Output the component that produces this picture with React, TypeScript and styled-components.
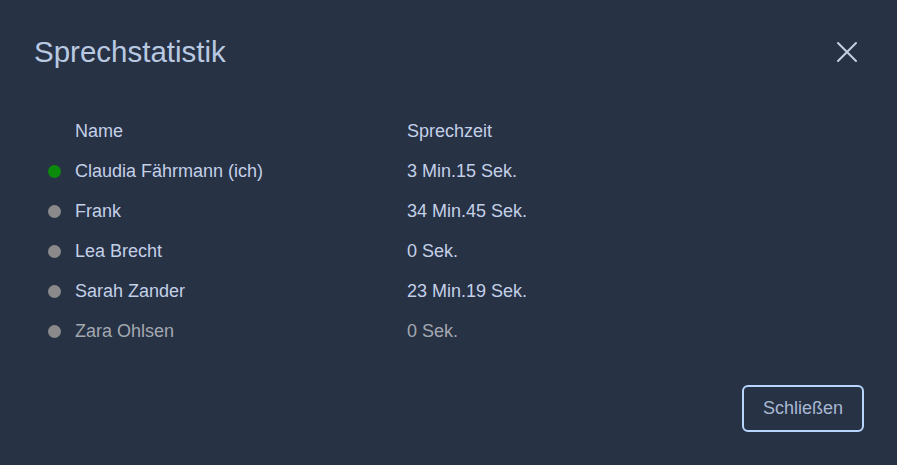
import React from 'react'
import styled, { createGlobalStyle } from 'styled-components'

type Speaker = {
  name: string
  time: string
  active?: boolean
  left?: boolean
}

const speakers: Speaker[] = [
  { name: 'Claudia Fährmann (ich)', time: '3 Min.15 Sek.', active: true },
  { name: 'Frank', time: '34 Min.45 Sek.' },
  { name: 'Lea Brecht', time: '0 Sek.' },
  { name: 'Sarah Zander', time: '23 Min.19 Sek.' },
  { name: 'Zara Ohlsen', time: '0 Sek.', left: true },
]

const GlobalStyle = createGlobalStyle`
  html, body {
    margin: 0;
    padding: 0;
    background: #283245;
  }
  body {
    font-family: "Liberation Sans", Arial, sans-serif;
  }
`

export default function App() {
  return (
    <>
      <GlobalStyle />
      <Dialog>
        <Header>
          <Title>Sprechstatistik</Title>
          <CloseButton aria-label="Schließen">
            <svg width="22" height="22" viewBox="0 0 22 22">
              <path d="M2 2 L20 20 M20 2 L2 20" stroke="#c3cfe2" strokeWidth="2" strokeLinecap="round" />
            </svg>
          </CloseButton>
        </Header>
        <Table>
          <Row>
            <DotCell />
            <HeadCell>Name</HeadCell>
            <HeadCell>Sprechzeit</HeadCell>
          </Row>
          {speakers.map(s => (
            <Row key={s.name}>
              <DotCell>
                <Dot $active={s.active} />
              </DotCell>
              <Cell $dim={s.left}>{s.name}</Cell>
              <Cell $dim={s.left}>{s.time}</Cell>
            </Row>
          ))}
        </Table>
        <Footer>
          <Button>Schließen</Button>
        </Footer>
      </Dialog>
    </>
  )
}

const Dialog = styled.div`
  width: 897px;
  height: 465px;
  box-sizing: border-box;
  padding: 32px 31px 0 34px;
  display: flex;
  flex-direction: column;
  background: #283245;
`

const Header = styled.div`
  display: flex;
  align-items: center;
  justify-content: space-between;
  height: 40px;
`

const Title = styled.h1`
  margin: 0;
  font-size: 29.5px;
  font-weight: 400;
  color: #b9c9e1;
`

const CloseButton = styled.button`
  background: none;
  border: none;
  padding: 0;
  margin-right: 8px;
  display: flex;
  cursor: pointer;
`

const Table = styled.div`
  margin-top: 39px;
  display: flex;
  flex-direction: column;
`

const Row = styled.div`
  display: grid;
  grid-template-columns: 41px 332px 1fr;
  align-items: center;
  height: 40px;
`

const DotCell = styled.div`
  display: flex;
  align-items: center;
  padding-left: 14px;
`

const Dot = styled.span<{ $active?: boolean }>`
  width: 13px;
  height: 13px;
  border-radius: 50%;
  background: ${p => (p.$active ? '#0b8a0b' : '#8a8a8a')};
`

const HeadCell = styled.div`
  font-size: 18px;
  color: #c3d0e8;
`

const Cell = styled.div<{ $dim?: boolean }>`
  font-size: 18px;
  color: ${p => (p.$dim ? '#a3a8b0' : '#c3d0e8')};
`

const Footer = styled.div`
  margin-top: auto;
  margin-bottom: 33px;
  display: flex;
  justify-content: flex-end;
  padding-right: 2px;
`

const Button = styled.button`
  width: 122px;
  height: 47px;
  box-sizing: border-box;
  border: 2.5px solid #b8d6fd;
  border-radius: 6px;
  background: transparent;
  font-family: "Liberation Sans", Arial, sans-serif;
  font-size: 18px;
  color: #a8b8d2;
  cursor: pointer;
`
